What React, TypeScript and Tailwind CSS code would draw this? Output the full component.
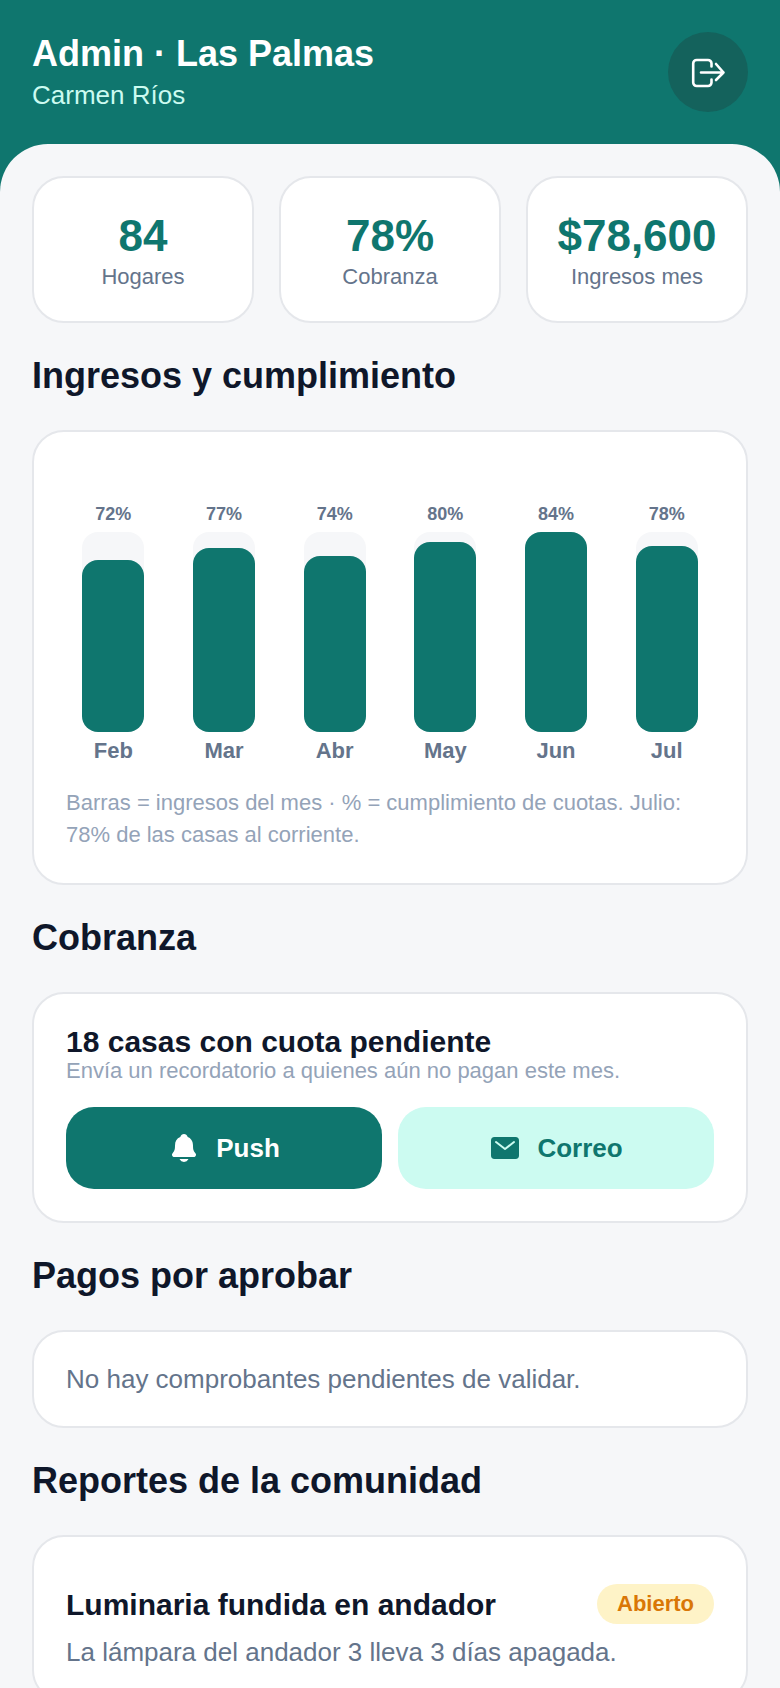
import { IoMail, IoNotifications } from 'react-icons/io5';

const stats = [
  { value: '84', label: 'Hogares' },
  { value: '78%', label: 'Cobranza' },
  { value: '$78,600', label: 'Ingresos mes' },
];

const bars = [
  { month: 'Feb', pct: 72, height: 172 },
  { month: 'Mar', pct: 77, height: 184 },
  { month: 'Abr', pct: 74, height: 176 },
  { month: 'May', pct: 80, height: 190 },
  { month: 'Jun', pct: 84, height: 200 },
  { month: 'Jul', pct: 78, height: 186 },
];

function SectionTitle({ children }: { children: string }) {
  return <h2 className="mt-8 mb-[34px] text-[36px] leading-[41px] font-bold text-[#0f172a]">{children}</h2>;
}

function LogoutIcon() {
  return (
    <svg width="36" height="32" viewBox="0 0 36 32" fill="none" stroke="currentColor" strokeWidth="2.6" strokeLinecap="round" strokeLinejoin="round">
      <path d="M21.5 10.5V7.5A3.5 3.5 0 0 0 18 4H6.7a3.5 3.5 0 0 0-3.5 3.500v19a3.5 3.5 0 0 0 3.5 3.5H18a3.5 3.5 0 0 0 3.5-3.5v-3" />
      <path d="M11 16.5h22.5M26 8l7.5 8.500L26 24" />
    </svg>
  );
}

export default function App() {
  return (
    <div className="h-[1688px] overflow-hidden bg-[#0f766e] font-['Liberation_Sans',Arial,sans-serif]">
      <header className="flex h-[144px] items-start justify-between px-8 pt-8">
        <div>
          <h1 className="text-[36px] leading-[43px] font-bold text-white">Admin · Las Palmas</h1>
          <p className="mt-[5px] text-[26px] leading-[30px] text-[#ccfbf1]">Carmen Ríos</p>
        </div>
        <button className="flex h-20 w-20 items-center justify-center rounded-full bg-[#14625c] text-white">
          <LogoutIcon />
        </button>
      </header>

      <main className="h-full rounded-t-[48px] bg-[#f6f7f9] px-8 pt-8">
        <div className="grid grid-cols-3 gap-[25px]">
          {stats.map((stat) => (
            <div
              key={stat.label}
              className="flex h-[147px] flex-col items-center justify-center rounded-[32px] border-2 border-[#e5e7eb] bg-white pt-[2px]"
            >
              <span className="text-[44px] leading-[50px] font-bold text-[#0f766e]">{stat.value}</span>
              <span className="mt-[3px] text-[22px] leading-[26px] text-[#64748b]">{stat.label}</span>
            </div>
          ))}
        </div>

        <SectionTitle>Ingresos y cumplimiento</SectionTitle>
        <section className="rounded-[32px] border-2 border-[#e5e7eb] bg-white p-8">
          <div className="grid grid-cols-6 gap-4 pt-[40px]">
            {bars.map((bar) => (
              <div key={bar.month} className="flex flex-col items-center">
                <span className="mb-[7px] text-[18px] leading-[21px] font-bold text-[#64748b]">{bar.pct}%</span>
                <div className="flex h-[200px] w-[62px] items-end rounded-2xl bg-[#f6f7f9]">
                  <div className="w-full rounded-2xl bg-[#0f766e]" style={{ height: bar.height }} />
                </div>
                <span className="mt-[6px] text-[22px] leading-[25px] font-bold text-[#64748b]">{bar.month}</span>
              </div>
            ))}
          </div>
          <p className="mt-6 text-[22px] leading-[32px] text-[#94a3b8]">
            Barras = ingresos del mes · % = cumplimiento de cuotas. Julio: 78% de las casas al corriente.
          </p>
        </section>

        <SectionTitle>Cobranza</SectionTitle>
        <section className="rounded-[32px] border-2 border-[#e5e7eb] bg-white px-8 pt-[31px] pb-8">
          <h3 className="text-[30px] leading-[33px] font-bold text-[#0f172a]">18 casas con cuota pendiente</h3>
          <p className="text-[22px] leading-[25px] text-[#94a3b8]">Envía un recordatorio a quienes aún no pagan este mes.</p>
          <div className="mt-6 grid grid-cols-2 gap-4">
            <button className="flex h-[82px] items-center justify-center gap-4 rounded-[28px] bg-[#0f766e] text-[26px] font-bold text-white">
              <IoNotifications className="h-8 w-8" />
              Push
            </button>
            <button className="flex h-[82px] items-center justify-center gap-4 rounded-[28px] bg-[#ccfbf1] text-[26px] font-bold text-[#0f766e]">
              <IoMail className="h-8 w-8" />
              Correo
            </button>
          </div>
        </section>

        <SectionTitle>Pagos por aprobar</SectionTitle>
        <section className="rounded-[32px] border-2 border-[#e5e7eb] bg-white p-8">
          <p className="text-[26px] leading-[30px] text-[#64748b]">No hay comprobantes pendientes de validar.</p>
        </section>

        <SectionTitle>Reportes de la comunidad</SectionTitle>
        <section className="rounded-[32px] border-2 border-[#e5e7eb] bg-white px-8 pt-[47px] pb-8">
          <div className="flex items-center justify-between">
            <h3 className="text-[30px] leading-[35px] font-bold text-[#0f172a]">Luminaria fundida en andador</h3>
            <span className="rounded-full bg-[#fef3c7] px-5 py-2 text-[22px] leading-6 font-bold text-[#d97706]">Abierto</span>
          </div>
          <p className="mt-3 text-[26px] leading-[32px] text-[#64748b]">La lámpara del andador 3 lleva 3 días apagada.</p>
        </section>
      </main>
    </div>
  );
}
